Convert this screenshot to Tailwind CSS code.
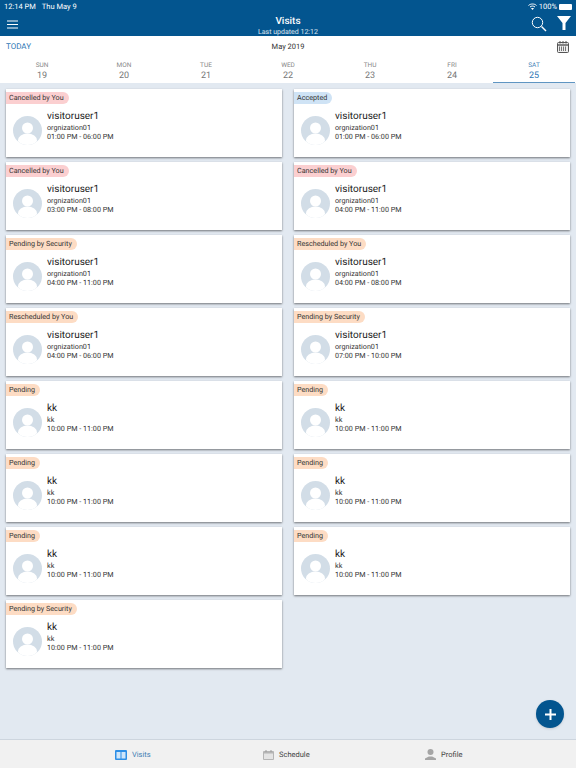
<!DOCTYPE html>
<html lang="en">
<head>
    <meta charset="UTF-8">
    <meta name="viewport" content="width=device-width, initial-scale=1.0">
    <title>Visits</title>
    <script src="https://cdn.jsdelivr.net/npm/@tailwindcss/browser@4"></script>
</head>
<body class="w-[576px] h-[768px] overflow-hidden relative flex flex-col bg-[#e2e9f1] antialiased [text-rendering:geometricPrecision] font-['Roboto','Liberation_Sans',sans-serif]">

    <header class="h-[36px] shrink-0 bg-[#03558f] text-white relative">
        <div class="h-[13px] px-[4px] flex items-center justify-between text-[7.5px]">
            <div class="flex gap-[6px]"><span>12:14 PM</span><span>Thu May 9</span></div>
            <div class="flex items-center gap-[2px]">
                <svg width="9" height="7" viewBox="0 0 18 14" fill="none" stroke="white" stroke-width="2"><path d="M1 5C5 1 13 1 17 5M4 8C7 5.5 11 5.5 14 8"/><path d="M9 14L6 10.5C8 9.5 10 9.5 12 10.5Z" fill="white" stroke="none"/></svg>
                <span>100%</span>
                <span class="w-[13px] h-[6px] bg-white rounded-[1px]"></span>
            </div>
        </div>
        <svg class="absolute left-[7px] top-[20px]" width="12" height="9" viewBox="0 0 12 9" stroke="white" stroke-width="1.2"><path d="M0 1H11M0 4.5H11M0 8H11"/></svg>
        <div class="absolute left-0 right-0 top-[16px] text-center">
            <div class="text-[10px] leading-[12px] font-medium">Visits</div>
            <div class="text-[7px] leading-[8px] text-white/85">Last updated 12:12</div>
        </div>
        <svg class="absolute left-[531px] top-[16px]" width="16" height="16" viewBox="0 0 16 16" fill="none" stroke="white"><circle cx="6.5" cy="6.5" r="5.2" stroke-width="1"/><path d="M10.5 10.5L15 15" stroke-width="1.4"/></svg>
        <svg class="absolute left-[557px] top-[16px]" width="14" height="14" viewBox="0 0 14 14" fill="white"><path d="M0 0H14L8.5 7V14H5.5V7Z"/></svg>
    </header>

    <section class="h-[47px] shrink-0 bg-white relative">
        <div class="h-[21px] px-[6px] flex items-center justify-between relative">
            <span class="text-[8px] text-[#2f78b5]">TODAY</span>
            <span class="absolute left-0 right-0 text-center text-[7.5px] text-[#333]">May 2019</span>
            <svg class="mr-[1px]" width="12" height="12" viewBox="0 0 12 12" fill="none" stroke="#555"><rect x="0.5" y="1.5" width="11" height="10" rx="1" fill="#eee"/><path d="M0.5 4H11.5" stroke-width="1.4"/><path d="M3 0V2.5M6 0V2.5M9 0V2.5" /><path d="M2.5 5.5V10M4.5 5.5V10M6.5 5.5V10M8.5 5.5V10" stroke-width="0.8"/></svg>
        </div>
        <div class="grid grid-cols-7 px-[1px] text-center">
            <div class="h-[26px]"><div class="text-[6.5px] leading-[10px] mt-[3px] text-[#888]">SUN</div><div class="text-[9px] leading-[13px] text-[#777]">19</div></div>
            <div class="h-[26px]"><div class="text-[6.5px] leading-[10px] mt-[3px] text-[#888]">MON</div><div class="text-[9px] leading-[13px] text-[#777]">20</div></div>
            <div class="h-[26px]"><div class="text-[6.5px] leading-[10px] mt-[3px] text-[#888]">TUE</div><div class="text-[9px] leading-[13px] text-[#777]">21</div></div>
            <div class="h-[26px]"><div class="text-[6.5px] leading-[10px] mt-[3px] text-[#888]">WED</div><div class="text-[9px] leading-[13px] text-[#777]">22</div></div>
            <div class="h-[26px]"><div class="text-[6.5px] leading-[10px] mt-[3px] text-[#888]">THU</div><div class="text-[9px] leading-[13px] text-[#777]">23</div></div>
            <div class="h-[26px]"><div class="text-[6.5px] leading-[10px] mt-[3px] text-[#888]">FRI</div><div class="text-[9px] leading-[13px] text-[#777]">24</div></div>
            <div class="h-[26px] border-b border-[#5f95c2]"><div class="text-[6.5px] leading-[10px] mt-[3px] text-[#4a86b8]">SAT</div><div class="text-[9px] leading-[13px] text-[#2f78b5]">25</div></div>
        </div>
    </section>

    <main id="list" class="flex-1 grid grid-cols-[276px_276px] gap-x-[12px] gap-y-[5px] content-start px-[6px] pt-[6px]"></main>

    <button class="absolute left-[536px] top-[700px] w-[28px] h-[28px] rounded-full bg-[#03558f] flex items-center justify-center shadow-sm">
        <svg width="11" height="11" viewBox="0 0 11 11" stroke="white" stroke-width="2"><path d="M5.5 0V11M0 5.5H11"/></svg>
    </button>

    <nav class="h-[29px] shrink-0 bg-[#f1f1f1] border-t border-[#cdd5de] relative text-[7.5px] text-[#444]">
        <div class="absolute left-[115px] top-[9px] flex items-center gap-[5px] text-[#3f7fb3]">
            <svg width="12" height="10" viewBox="0 0 12 10"><rect width="12" height="10" rx="1" fill="#2e8fe6"/><rect x="1.5" y="2" width="4" height="6.5" fill="#cfe6fa"/><rect x="6.5" y="2" width="4" height="6.5" fill="#cfe6fa"/></svg>
            <span>Visits</span>
        </div>
        <div class="absolute left-[263px] top-[9px] flex items-center gap-[5px]">
            <svg width="11" height="10" viewBox="0 0 11 10"><rect y="1" width="11" height="9" rx="1" fill="#b5b5b5"/><rect x="1" y="3.5" width="9" height="5.5" fill="#e4e4e4"/><path d="M3 0V2M8 0V2" stroke="#999"/></svg>
            <span>Schedule</span>
        </div>
        <div class="absolute left-[425px] top-[9px] flex items-center gap-[5px]">
            <svg width="11" height="11" viewBox="0 0 11 11" fill="#a5a5a5"><circle cx="5.5" cy="3" r="3"/><path d="M0 11V9.5L3.8 7.5H7.2L11 9.5V11Z"/></svg>
            <span>Profile</span>
        </div>
    </nav>

    <script>
        const visits = [
            ['Cancelled by You', 'r', 'visitoruser1', 'orgnization01', '01:00 PM - 06:00 PM'],
            ['Accepted', 'b', 'visitoruser1', 'orgnization01', '01:00 PM - 06:00 PM'],
            ['Cancelled by You', 'r', 'visitoruser1', 'orgnization01', '03:00 PM - 08:00 PM'],
            ['Cancelled by You', 'r', 'visitoruser1', 'orgnization01', '04:00 PM - 11:00 PM'],
            ['Pending by Security', 'o', 'visitoruser1', 'orgnization01', '04:00 PM - 11:00 PM'],
            ['Rescheduled by You', 'o', 'visitoruser1', 'orgnization01', '04:00 PM - 08:00 PM'],
            ['Rescheduled by You', 'o', 'visitoruser1', 'orgnization01', '04:00 PM - 06:00 PM'],
            ['Pending by Security', 'o', 'visitoruser1', 'orgnization01', '07:00 PM - 10:00 PM'],
            ['Pending', 'o', 'kk', 'kk', '10:00 PM - 11:00 PM'],
            ['Pending', 'o', 'kk', 'kk', '10:00 PM - 11:00 PM'],
            ['Pending', 'o', 'kk', 'kk', '10:00 PM - 11:00 PM'],
            ['Pending', 'o', 'kk', 'kk', '10:00 PM - 11:00 PM'],
            ['Pending', 'o', 'kk', 'kk', '10:00 PM - 11:00 PM'],
            ['Pending', 'o', 'kk', 'kk', '10:00 PM - 11:00 PM'],
            ['Pending by Security', 'o', 'kk', 'kk', '10:00 PM - 11:00 PM'],
        ];
        const badgeColors = { r: 'bg-[#fbcfd0]', b: 'bg-[#cfe3f5]', o: 'bg-[#fddcc4]' };
        document.getElementById('list').innerHTML = visits.map(v => `
            <div class="h-[68px] bg-white shadow-[0_1px_2px_rgba(0,0,0,0.5)] pt-[3px]">
                <div class="w-fit h-[12px] leading-[12px] pl-[3px] pr-[5px] rounded-r-full text-[7.2px] text-[#333] ${badgeColors[v[1]]}">${v[0]}</div>
                <div class="flex gap-[5px] pl-[7px] mt-[6px]">
                    <svg class="mt-[6px] shrink-0" width="29" height="29" viewBox="0 0 29 29"><defs><clipPath id="c"><circle cx="14.5" cy="14.5" r="14.5"/></clipPath></defs><circle cx="14.5" cy="14.5" r="14.5" fill="#d2dde7"/><g clip-path="url(#c)" fill="white"><circle cx="14.5" cy="12" r="5.5"/><ellipse cx="14.5" cy="24.5" rx="9.5" ry="7"/></g></svg>
                    <div class="text-[#222]">
                        <div class="text-[10px] leading-[13px]">${v[2]}</div>
                        <div class="text-[7.2px] leading-[9px] text-[#333]">${v[3]}</div>
                        <div class="text-[7.2px] leading-[9px] text-[#333]">${v[4]}</div>
                    </div>
                </div>
            </div>`).join('');
    </script>
</body>
</html>
